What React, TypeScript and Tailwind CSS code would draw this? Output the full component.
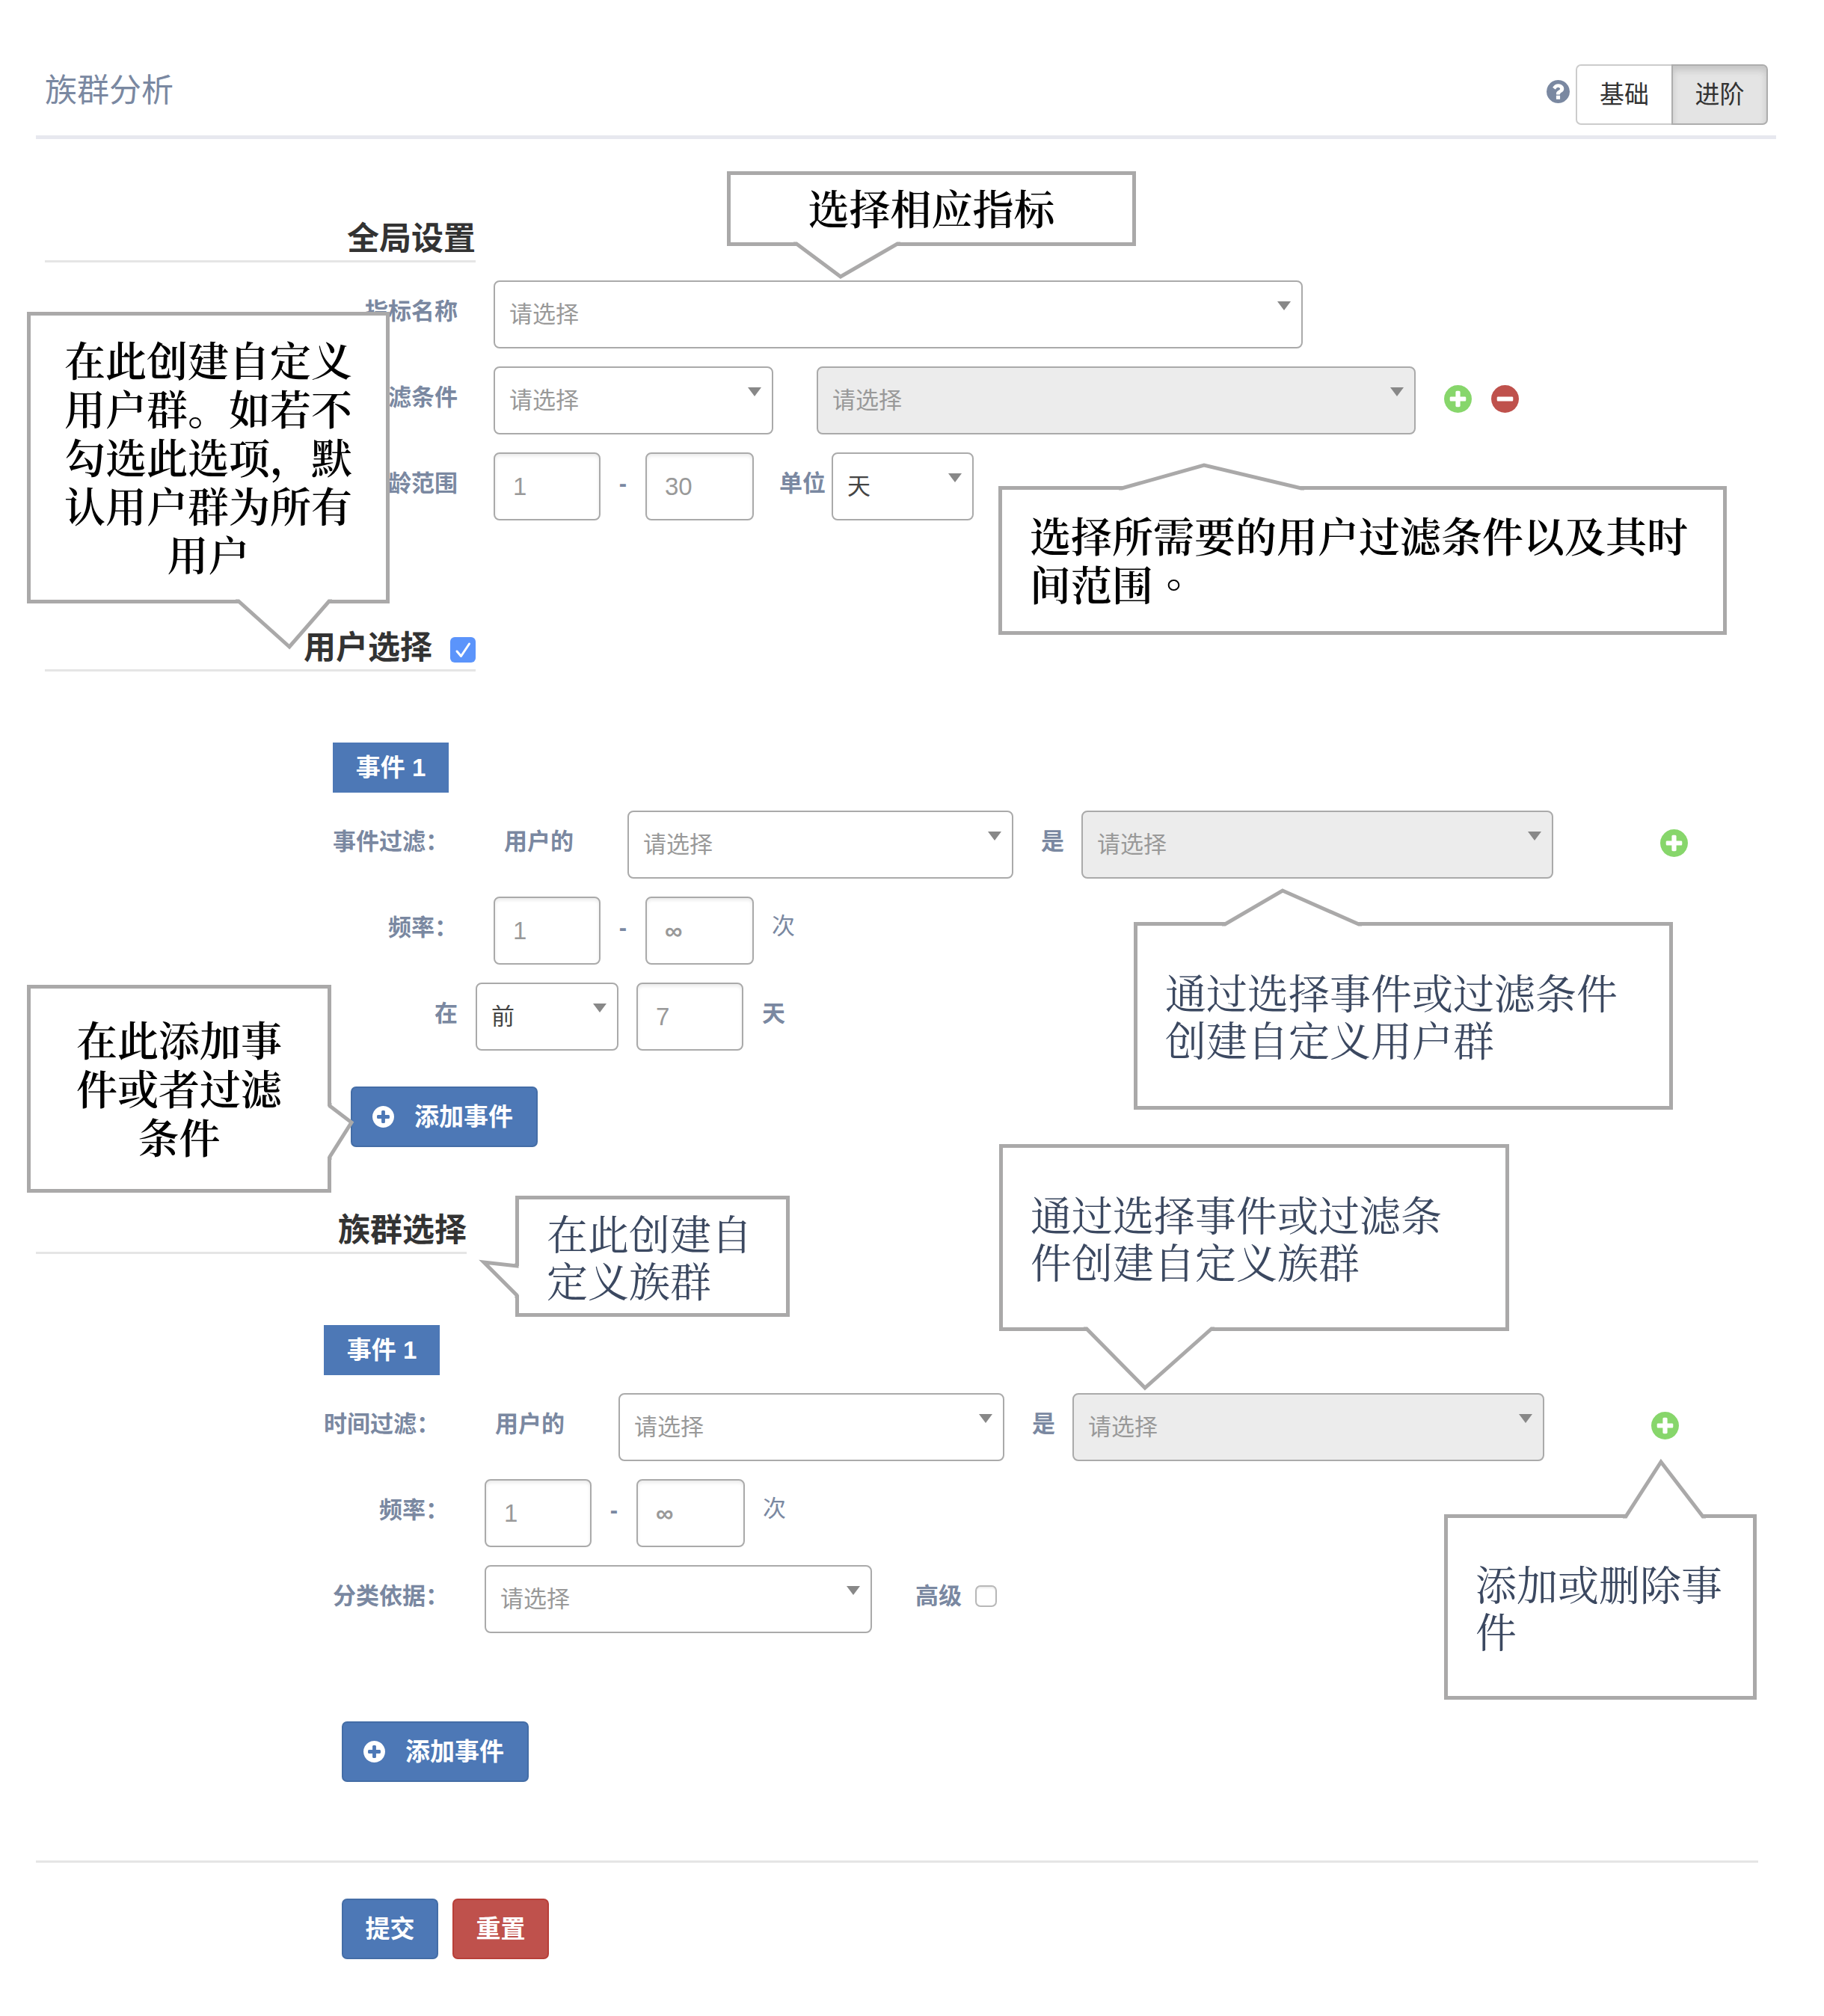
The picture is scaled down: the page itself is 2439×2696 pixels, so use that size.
import type { ReactNode } from "react";

type Point = [number, number];
type Side = "top" | "bottom" | "left" | "right";

const DISC =
  "M1664 896q0 209-103 385.5t-279.5 279.5-385.5 103-385.5-103-279.5-279.5-103-385.5 103-385.5 279.5-279.5 385.5-103 385.5 103 279.5 279.5 103 385.5z";
const PLUS =
  "M1344 960v-128q0-26-19-45t-45-19h-256v-256q0-26-19-45t-45-19h-128q-26 0-45 19t-19 45v256h-256q-26 0-45 19t-19 45v128q0 26 19 45t45 19h256v256q0 26 19 45t45 19h128q26 0 45-19t19-45v-256h256q26 0 45-19t19-45z";
const MINUS = "M1344 960v-128q0-26-19-45t-45-19h-768q-26 0-45 19t-19 45v128q0 26 19 45t45 19h768q26 0 45-19t19-45z";
const QUESTION =
  "M1024 1376v-192q0-14-9-23t-23-9h-192q-14 0-23 9t-9 23v192q0 14 9 23t23 9h192q14 0 23-9t9-23zm256-672q0-88-55.5-163t-138.5-116-170-41q-243 0-371 213-15 24 8 42l132 100q7 6 19 6 16 0 25-12 53-68 86-92 34-24 86-24 48 0 85.5 26t37.5 59q0 38-20 61t-68 45q-63 28-115.5 86.5t-52.5 125.5v36q0 14 9 23t23 9h192q14 0 23-9t9-23q0-19 21.5-49.5t54.5-49.5q32-18 49-28.5t46-35 44.5-48 28-60.5 12.5-81z";

function CircleIcon({ mark, className }: { mark: string; className: string }) {
  return (
    <svg viewBox="128 128 1536 1536" fill="currentColor" fillRule="evenodd" aria-hidden="true" className={className}>
      <path d={DISC + mark} />
    </svg>
  );
}

const INWARD: Record<Side, Point> = { top: [0, 1], bottom: [0, -1], left: [1, 0], right: [-1, 0] };
const ALONG: Record<Side, Point> = { top: [1, 0], bottom: [1, 0], left: [0, 1], right: [0, 1] };

/** Pointer of a callout; points run along the side of the box, with the tip in the middle. */
function Tail({ side, from, tip, to }: { side: Side; from: Point; tip: Point; to: Point }) {
  const move = (p: Point, v: Point, k: number): Point => [p[0] + v[0] * k, p[1] + v[1] * k];
  const fill = [move(from, INWARD[side], 4), from, tip, to, move(to, INWARD[side], 4)];
  const line = [move(from, ALONG[side], -4), from, tip, to, move(to, ALONG[side], 4)];
  return (
    <svg aria-hidden="true" className="absolute -left-[5px] -top-[5px] h-px w-px overflow-visible">
      <polygon points={fill.join(" ")} fill="#fff" />
      <polyline points={line.join(" ")} fill="none" stroke="#aaa9a9" strokeWidth="5" strokeMiterlimit="10" />
    </svg>
  );
}

function Callout({
  className,
  tone,
  tail,
  children,
}: {
  className: string;
  tone: "strong" | "centered" | "soft";
  tail: ReactNode;
  children: ReactNode;
}) {
  const tones = {
    strong: "pl-[37px] pb-[6px] font-semibold leading-[65px] text-black",
    centered: "justify-center pb-[6px] text-center font-semibold leading-[65px] text-black",
    soft: "pl-[37px] pb-[3px] font-normal leading-[63px] text-[#3b4860]",
  };
  return (
    <aside
      className={`absolute z-10 flex items-center whitespace-nowrap border-[5px] border-[#aaa9a9] bg-white font-['Noto_Serif_CJK_SC','Noto_Sans_CJK_SC',serif] text-[55px] ${tones[tone]} ${className}`}
    >
      {tail}
      <p>{children}</p>
    </aside>
  );
}

function Select({
  id,
  label,
  value = "请选择",
  disabled = false,
  className,
}: {
  id: string;
  label?: string;
  value?: string;
  disabled?: boolean;
  className: string;
}) {
  const placeholder = value === "请选择";
  return (
    <div className={`relative h-[91px] ${className}`}>
      <select
        id={id}
        aria-label={label}
        disabled={disabled}
        defaultValue={value}
        className={`h-full w-full appearance-none rounded-[8px] border-2 border-[#aaa] pl-[19px] pr-10 text-[31px] opacity-100 ${
          disabled ? "bg-[#ececec]" : "bg-white"
        } ${placeholder ? "text-[#999]" : "text-[#444]"}`}
      >
        <option>{value}</option>
      </select>
      <svg viewBox="0 0 18 12" aria-hidden="true" className="pointer-events-none absolute right-4 top-7 h-3 w-[18px]">
        <path d="M0 0h18l-9 12z" fill="#888" />
      </svg>
    </div>
  );
}

function NumberBox({ id, label, value, className }: { id: string; label?: string; value: string; className: string }) {
  return (
    <input
      id={id}
      aria-label={label}
      type="text"
      defaultValue={value}
      className={`h-[91px] shrink-0 rounded-[8px] border-2 border-[#aaa] bg-white pl-6 text-[33px] text-[#999] shadow-[inset_0_3px_4px_rgba(0,0,0,0.08)] ${className}`}
    />
  );
}

function Label({ htmlFor, className = "", children }: { htmlFor: string; className?: string; children: ReactNode }) {
  return (
    <label htmlFor={htmlFor} className={`shrink-0 whitespace-nowrap pb-2 font-bold ${className}`}>
      {children}
    </label>
  );
}

function Row({ children }: { children: ReactNode }) {
  return <div className="flex items-center">{children}</div>;
}

function Dash() {
  return <span className="w-[60px] shrink-0 pb-2 text-center font-bold">-</span>;
}

function Badge({ children }: { children: ReactNode }) {
  return (
    <div className="ml-[385px] flex h-[67px] w-[155px] items-center justify-center bg-[#4d78b6] text-[33px] font-bold text-white">
      {children}
    </div>
  );
}

function IconButton({ label, mark, className }: { label: string; mark: string; className: string }) {
  return (
    <button type="button" aria-label={label} className={`shrink-0 pb-1 ${className}`}>
      <CircleIcon mark={mark} className="h-[37px] w-[37px]" />
    </button>
  );
}

function AddEventButton({ className }: { className: string }) {
  return (
    <button
      type="button"
      className={`ml-[409px] flex h-[81px] w-[250px] items-center rounded-[7px] border-2 border-[#446da6] bg-[#4d78b6] pl-[27px] text-[33px] font-semibold text-white ${className}`}
    >
      <CircleIcon mark={PLUS} className="mr-[27px] h-[29px] w-[29px]" />
      添加事件
    </button>
  );
}

function SectionTitle({ className, children }: { className: string; children: ReactNode }) {
  return (
    <div
      className={`flex w-[576px] items-center justify-end border-b-[3px] border-[#e5e5e5] pt-[3px] text-[43px] font-bold leading-[57px] text-[#333] ${className}`}
    >
      {children}
    </div>
  );
}

function FilterRow({ id, title }: { id: string; title: string }) {
  return (
    <Row>
      <Label htmlFor={`${id}-property`} className="ml-[385px] w-[229px]">
        {title}
      </Label>
      <Label htmlFor={`${id}-property`} className="w-[165px]">
        用户的
      </Label>
      <Select id={`${id}-property`} className="w-full max-w-[516px]" />
      <Label htmlFor={`${id}-value`} className="ml-[37px] mr-[23px]">
        是
      </Label>
      <Select id={`${id}-value`} disabled className="w-full max-w-[631px]" />
      <IconButton label="添加过滤" mark={PLUS} className="ml-[143px] text-[#87d66b]" />
    </Row>
  );
}

function FrequencyRow({ id }: { id: string }) {
  return (
    <Row>
      <Label htmlFor={`${id}-min`} className="mr-12 w-[552px] text-right">
        频率：
      </Label>
      <NumberBox id={`${id}-min`} value="1" className="w-[143px]" />
      <Dash />
      <NumberBox id={`${id}-max`} label="最大频率" value="∞" className="w-[145px] font-bold" />
      <span className="ml-6 pb-3">次</span>
    </Row>
  );
}

export default function App() {
  return (
    <div className="relative w-full bg-white pb-[77px] pl-12 pr-16 pt-[86px] font-['Liberation_Sans','Noto_Sans_CJK_SC',sans-serif] text-[31px] leading-[46px] text-[#7a88a1]">
      <header className="flex items-center justify-between border-b-[5px] border-[#e7e8ef] pb-[14px] pl-3 pr-[11px]">
        <h1 className="pb-3 text-[43px] leading-[60px]">族群分析</h1>
        <div className="flex items-center gap-2">
          <button type="button" aria-label="帮助" className="pb-2">
            <CircleIcon mark={QUESTION} className="h-[31px] w-[31px]" />
          </button>
          <div className="flex h-[81px] text-[33px] text-[#333]">
            <button type="button" className="w-[128px] rounded-l-[7px] border-2 border-r-0 border-[#ccc] bg-white">
              基础
            </button>
            <button
              type="button"
              aria-pressed="true"
              className="w-[129px] rounded-r-[7px] border-2 border-[#adadad] bg-[#e4e4e4] shadow-[inset_0_6px_10px_rgba(0,0,0,0.14)]"
            >
              进阶
            </button>
          </div>
        </div>
      </header>

      <form className="mt-[102px]">
        <section className="ml-3 flex flex-col gap-6">
          <SectionTitle className="">
            <h2>全局设置</h2>
          </SectionTitle>
          <Row>
            <Label htmlFor="metric" className="mr-12 w-[552px] text-right">
              指标名称
            </Label>
            <Select id="metric" className="w-full max-w-[1082px]" />
          </Row>
          <Row>
            <Label htmlFor="filter" className="mr-12 w-[552px] text-right">
              过滤条件
            </Label>
            <Select id="filter" className="mr-[58px] w-full max-w-[374px]" />
            <Select id="filter-value" label="过滤值" disabled className="w-full max-w-[801px]" />
            <IconButton label="添加" mark={PLUS} className="ml-[38px] text-[#87d66b]" />
            <IconButton label="删除" mark={MINUS} className="ml-[26px] text-[#bf514c]" />
          </Row>
          <Row>
            <Label htmlFor="age-min" className="mr-12 w-[552px] text-right">
              族龄范围
            </Label>
            <NumberBox id="age-min" value="1" className="w-[143px]" />
            <Dash />
            <NumberBox id="age-max" label="最大族龄" value="30" className="w-[145px]" />
            <Label htmlFor="unit" className="ml-[34px] mr-2">
              单位
            </Label>
            <Select id="unit" value="天" className="w-[190px]" />
          </Row>
        </section>

        <section className="ml-3 mt-[139px]">
          <SectionTitle className="mb-[95px]">
            <h2>
              <label htmlFor="user-select">用户选择</label>
            </h2>
            <span className="relative ml-6 mt-[5px] block h-[34px] w-[34px]">
              <input
                id="user-select"
                type="checkbox"
                defaultChecked
                className="absolute inset-0 h-full w-full appearance-none rounded-[6px] bg-[#5b94fb]"
              />
              <svg viewBox="0 0 34 34" aria-hidden="true" className="pointer-events-none absolute inset-0">
                <path
                  d="M9 19l5.500 6.500L25.500 9"
                  fill="none"
                  stroke="#fff"
                  strokeWidth="3"
                  strokeLinecap="round"
                  strokeLinejoin="round"
                />
              </svg>
            </span>
          </SectionTitle>
          <div className="flex flex-col gap-6">
            <Badge>事件 1</Badge>
            <FilterRow id="user-filter" title="事件过滤：" />
            <FrequencyRow id="user-frequency" />
            <Row>
              <Label htmlFor="period" className="mr-6 w-[552px] text-right">
                在
              </Label>
              <Select id="period" value="前" className="mr-6 w-[191px]" />
              <NumberBox id="days" label="天数" value="7" className="w-[143px]" />
              <Label htmlFor="days" className="ml-[25px]">
                天
              </Label>
            </Row>
          </div>
          <AddEventButton className="mt-12" />
        </section>

        <section className="mt-20">
          <SectionTitle className="mb-[95px]">
            <h2>族群选择</h2>
          </SectionTitle>
          <div className="flex flex-col gap-6">
            <Badge>事件 1</Badge>
            <FilterRow id="group-filter" title="时间过滤：" />
            <FrequencyRow id="group-frequency" />
            <Row>
              <Label htmlFor="group-by" className="mr-12 w-[552px] text-right">
                分类依据：
              </Label>
              <Select id="group-by" className="w-full max-w-[518px]" />
              <Label htmlFor="advanced" className="ml-[58px] mr-[18px]">
                高级
              </Label>
              <input
                id="advanced"
                type="checkbox"
                className="mb-2 h-[29px] w-[29px] shrink-0 appearance-none rounded-[7px] border-2 border-[#b8b8b8] bg-white shadow-[inset_0_2px_2px_rgba(0,0,0,0.08)]"
              />
            </Row>
          </div>
          <AddEventButton className="mt-[118px]" />
        </section>

        <div className="mr-6 mt-[105px] flex gap-[19px] border-t-[3px] border-[#e5e5e5] pl-[409px] pt-12 text-[33px] font-semibold text-white">
          <button type="submit" className="h-[81px] w-[129px] rounded-[7px] border-2 border-[#446da6] bg-[#4d78b6]">
            提交
          </button>
          <button type="reset" className="h-[81px] w-[129px] rounded-[7px] border-2 border-[#b83f38] bg-[#bf514c]">
            重置
          </button>
        </div>
      </form>

      <Callout
        tone="centered"
        className="left-[972px] top-[229px] h-[100px] w-[547px]"
        tail={<Tail side="bottom" from={[93, 97]} tip={[152, 141]} to={[228, 97]} />}
      >
        选择相应指标
      </Callout>
      <Callout
        tone="centered"
        className="left-9 top-[417px] h-[390px] w-[485px]"
        tail={<Tail side="bottom" from={[283, 387]} tip={[351, 448]} to={[404, 387]} />}
      >
        在此创建自定义
        <br />
        用户群。如若不
        <br />
        勾选此选项，默
        <br />
        认用户群为所有
        <br />
        用户
      </Callout>
      <Callout
        tone="strong"
        className="left-[1335px] top-[650px] h-[199px] w-[974px]"
        tail={<Tail side="top" from={[165, 3]} tip={[275, -28]} to={[405, 3]} />}
      >
        选择所需要的用户过滤条件以及其时
        <br />
        间范围
        <span lang="zh-TW" className="font-['Noto_Serif_CJK_TC','Noto_Sans_CJK_TC',serif]">
          。
        </span>
      </Callout>
      <Callout
        tone="soft"
        className="left-[1516px] top-[1233px] h-[251px] w-[721px]"
        tail={<Tail side="top" from={[122, 3]} tip={[199, -42]} to={[301, 3]} />}
      >
        通过选择事件或过滤条件
        <br />
        创建自定义用户群
      </Callout>
      <Callout
        tone="centered"
        className="left-9 top-[1317px] h-[278px] w-[407px]"
        tail={<Tail side="right" from={[405, 162]} tip={[434, 184]} to={[405, 230]} />}
      >
        在此添加事
        <br />
        件或者过滤
        <br />
        条件
      </Callout>
      <Callout
        tone="soft"
        className="left-[689px] top-[1599px] h-[162px] w-[367px]"
        tail={<Tail side="left" from={[2, 94]} tip={[-42, 89]} to={[2, 133]} />}
      >
        在此创建自
        <br />
        定义族群
      </Callout>
      <Callout
        tone="soft"
        className="left-[1336px] top-[1530px] h-[250px] w-[682px]"
        tail={<Tail side="bottom" from={[117, 247]} tip={[195, 326]} to={[284, 247]} />}
      >
        通过选择事件或过滤条
        <br />
        件创建自定义族群
      </Callout>
      <Callout
        tone="soft"
        className="left-[1931px] top-[2025px] h-[248px] w-[418px]"
        tail={<Tail side="top" from={[243, 3]} tip={[290, -70]} to={[346, 3]} />}
      >
        添加或删除事
        <br />件
      </Callout>
    </div>
  );
}
